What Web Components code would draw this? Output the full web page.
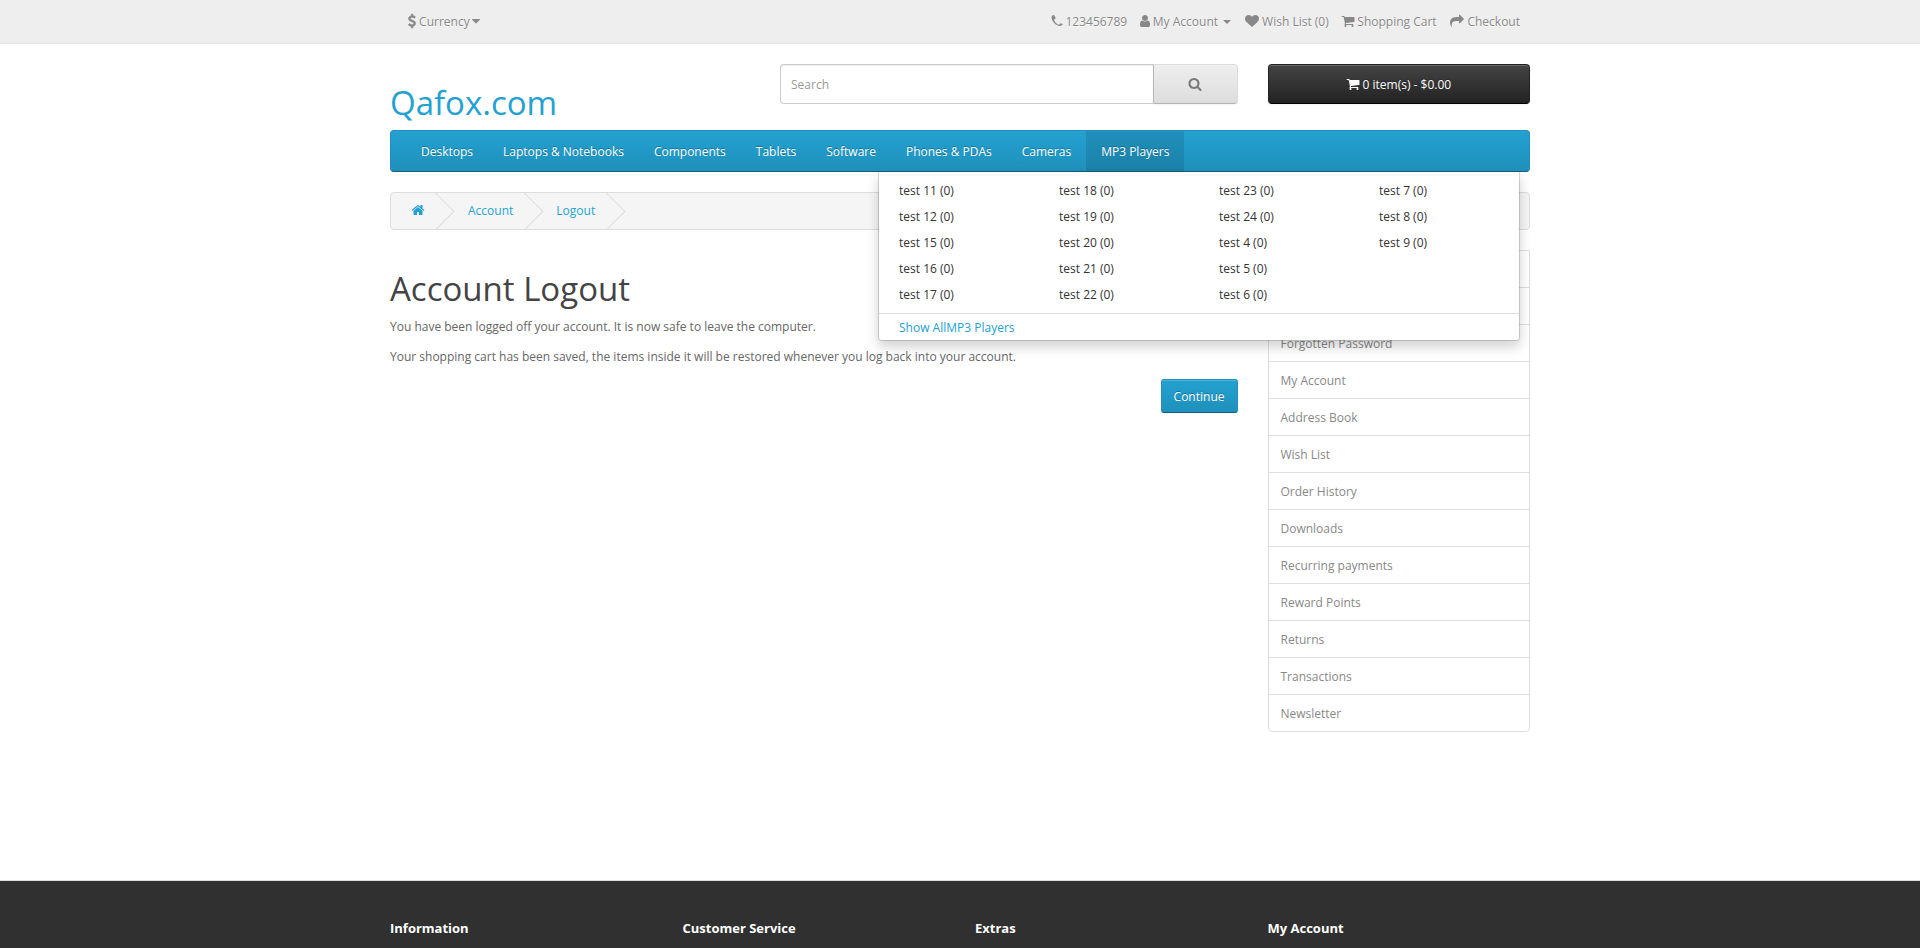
<!DOCTYPE html>
<html lang="en">
<head>
<meta charset="utf-8">
<title>Account Logout</title>
<style>
    html, body { margin: 0; padding: 0; background: #fff; }
    body { font-family: "Open Sans", sans-serif; font-size: 12px; line-height: 20px; color: #666; overflow: hidden; }
</style>
</head>
<body>
<top-bar></top-bar>
<site-header></site-header>
<main-menu active="MP3 Players"></main-menu>
<bread-crumbs></bread-crumbs>
<page-body>
    <h1 slot="title">Account Logout</h1>
    <p>You have been logged off your account. It is now safe to leave the computer.</p>
    <p>Your shopping cart has been saved, the items inside it will be restored whenever you log back into your account.</p>
    <account-list slot="side"></account-list>
</page-body>
<site-footer></site-footer>

<script>
const ICONS = {
    home: [13, "M1472 992v480q0 26-19 45t-45 19h-384v-384h-256v384h-384q-26 0-45-19t-19-45v-480q0-1 .5-3t.5-3l575-474 575 474q1 2 1 6zm223-69l-62 74q-8 9-21 11h-3q-13 0-21-7l-692-577-692 577q-12 8-24 7-13-2-21-11l-62-74q-8-10-7-23.5t11-21.5l719-599q32-26 76-26t76 26l244 204v-195q0-14 9-23t23-9h192q14 0 23 9t9 23v408l219 182q10 8 11 21.5t-7 23.5z"],
    search: [13, "M1216 832q0-185-131.5-316.5t-316.5-131.5-316.5 131.5-131.5 316.5 131.5 316.5 316.5 131.5 316.5-131.5 131.5-316.5zm512 832q0 52-38 90t-90 38q-54 0-90-38l-343-342q-179 124-399 124-143 0-273.5-55.5t-225-150-150-225-55.5-273.5 55.5-273.5 150-225 225-150 273.5-55.5 273.5 55.5 225 150 150 225 55.5 273.5q0 220-124 399l343 343q37 37 37 90z"],
    cart: [13, "M704 1536q0 52-38 90t-90 38-90-38-38-90 38-90 90-38 90 38 38 90zm896 0q0 52-38 90t-90 38-90-38-38-90 38-90 90-38 90 38 38 90zm128-1088v512q0 24-16.5 42.5t-40.5 21.5l-1044 122q13 60 13 70 0 16-24 64h920q26 0 45 19t19 45-19 45-45 19h-1024q-26 0-45-19t-19-45q0-11 8-31.5t16-36 21.5-40 15.5-29.5l-177-823h-204q-26 0-45-19t-19-45 19-45 45-19h256q16 0 28.5 6.5t19.5 15.5 13 24.5 8 26 5.5 29.5 4.5 26h1201q26 0 45 19t19 45z"],
    heart: [14, "M896 1664q-26 0-44-18l-624-602q-10-8-27.5-26t-55.5-65.5-68-97.5-53.5-121-23.5-138q0-220 127-344t351-124q62 0 126.5 21.5t120 58 95.5 68.5 76 68q36-36 76-68t95.5-68.5 120-58 126.5-21.5q224 0 351 124t127 344q0 221-229 450l-623 600q-18 18-44 18z"],
    user: [10, "M1536 1399q0 109-62.5 187t-150.5 78h-854q-88 0-150.5-78t-62.5-187q0-85 8.5-160.5t31.5-152 58.5-131 94-89 134.5-34.5q131 128 313 128t313-128q76 0 134.5 34.5t94 89 58.5 131 31.5 152 8.5 160.5zm-256-887q0 159-112.5 271.5t-271.5 112.5-271.5-112.5-112.5-271.5 112.5-271.5 271.5-112.5 271.5 112.5 112.5 271.5z"],
    phone: [11, "M1600 1240q0 27-10 70.5t-21 70.5q-21 50-122 106-94 51-186 51-27 0-53-3.5t-57.5-12.5-47-14.5-55.5-20.5-49-18q-98-35-175-83-127-79-264-216t-216-264q-48-77-83-175-3-9-18-49t-20.5-55.5-14.5-47-12.5-57.5-3.5-53q0-92 51-186 56-101 106-122 25-11 66.5-20.5t70.5-9.5q15 0 23 3 20 7 59 85 12 21 33 60t39 70.5 35 59.5q2 3 19.5 28t26 42.5 8.5 34.5q0 24-34 60t-74 66-74 64-34 55q0 11 6 27.5t10 25 16 27.5 13 21q90 162 206 278t278 206q2 1 21 13t27.5 16 25 10 27.5 6q21 0 55-34t64-74 66-74 60-34q17 0 34.5 8.5t42.5 26 28 19.5q28 17 59.5 35t70.5 39 60 33q78 39 85 59 3 8 3 23z"],
    share: [14, "M1792 640q0 26-19 45l-512 512q-19 19-45 19t-45-19-19-45v-256h-224q-98 0-175.5 6t-154 21.5-133 42.5-105.5 69.5-80 101-48.5 138.5-17.5 181q0 55 5 123 0 6 2.5 23.5t2.5 26.5q0 15-8.5 25t-23.5 10q-16 0-28-17-7-9-13-22t-13.5-30-10.5-24q-127-285-127-451 0-199 53-333 162-403 875-403h224v-256q0-26 19-45t45-19 45 19l512 512q19 19 19 45z"],
    usd: [8, "M1362 1185q0 153-99.5 263.5t-258.5 136.5v175q0 14-9 23t-23 9h-135q-13 0-22.5-9.5t-9.5-22.5v-175q-66-9-127.5-31t-101.5-44.5-74-48-46.5-37.5-17.5-18q-17-21-2-41l103-135q7-10 23-12 15-2 24 9l2 2q113 99 243 125 37 8 74 8 81 0 142.5-43t61.5-122q0-28-15-53t-33.5-42-58.5-37.5-66-32-80-32.5q-39-16-61.5-25t-61.5-26.5-62.5-31-56.5-35.5-53.5-42.5-43.5-49-35.5-58-21-66.5-8.5-78q0-138 98-242t255-134v-180q0-13 9.5-22.5t22.5-9.5h135q14 0 23 9t9 23v176q57 6 110.5 23t87 33.5 63.5 37.5 39 29 15 14q17 18 5 38l-81 146q-8 15-23 16-14 3-27-7-3-3-14.5-12t-39-26.5-58.5-32-74.5-26-85.5-11.5q-95 0-155 43t-60 111q0 26 8.5 48t29.5 41.5 39.5 33 56 31 60.5 27 70 27.5q53 20 81 31.5t76 35 75.5 42.5 62 50 53 63.5 31.5 76.5 13 94z"],
    caret: [8, "M1408 704q0 26-19 45l-448 448q-19 19-45 19t-45-19l-448-448q-19-19-19-45t19-45 45-19h896q26 0 45 19t19 45z"]
};

class FaIcon extends HTMLElement {
    constructor() {
        super();
        this.attachShadow({ mode: "open" });
    }
    connectedCallback() {
        const [width, d] = ICONS[this.getAttribute("name")];
        this.shadowRoot.innerHTML = `
            <style>
                :host { display: inline-flex; justify-content: center; align-items: center; width: ${width}px; height: 14px; vertical-align: -2px; }
                svg { flex: none; width: 14px; height: 14px; fill: currentColor; overflow: visible; }
            </style>
            <svg viewBox="0 0 1792 1792"><path d="${d}"/></svg>
        `;
    }
}
customElements.define("fa-icon", FaIcon);

class TopBar extends HTMLElement {
    constructor() {
        super();
        this.attachShadow({ mode: "open" });
        this.shadowRoot.innerHTML = `
            <style>
                :host { display: block; background: #eee; border-bottom: 1px solid #e2e2e2; margin-bottom: 20px; color: #888; }
                .container { width: 1140px; height: 43px; margin: 0 auto; display: flex; justify-content: space-between; align-items: center; }
                a { color: #888; text-decoration: none; text-shadow: 0 1px 0 #fff; white-space: nowrap; }
                .currency { padding-left: 18px; }
                .links { display: flex; gap: 12.5px; padding-right: 10px; }
                .links .account { margin-right: 1.3px; }
                .links .shop { margin-right: 1.2px; }
                .usd { stroke: currentColor; stroke-width: 70px; }
                .caret { display: inline-block; margin-left: 2px; vertical-align: middle; border-top: 4px solid #888; border-left: 4px solid transparent; border-right: 4px solid transparent; }
            </style>
            <div class="container">
                <a class="currency" href="#"><fa-icon class="usd" name="usd"></fa-icon> Currency <fa-icon name="caret" style="margin-left:-1px"></fa-icon></a>
                <div class="links">
                    <a href="#"><fa-icon name="phone"></fa-icon> 123456789</a>
                    <a class="account" href="#"><fa-icon name="user"></fa-icon> My Account <span class="caret"></span></a>
                    <a href="#"><fa-icon name="heart"></fa-icon> Wish List (0)</a>
                    <a class="shop" href="#"><fa-icon name="cart"></fa-icon> Shopping Cart</a>
                    <a href="#"><fa-icon name="share"></fa-icon> Checkout</a>
                </div>
            </div>
        `;
    }
}
customElements.define("top-bar", TopBar);

class SiteHeader extends HTMLElement {
    constructor() {
        super();
        this.attachShadow({ mode: "open" });
        this.shadowRoot.innerHTML = `
            <style>
                :host { display: block; }
                .container { width: 1140px; height: 66px; margin: 0 auto; display: grid; grid-template-columns: 360px 457.5px 262.5px; column-gap: 30px; align-items: start; }
                h1 { margin: 21px 0 0; font-size: 33px; line-height: 36px; font-weight: 400; }
                h1 a { color: #23a1d1; text-decoration: none; }
                .search { display: flex; height: 40px; }
                input { flex: 1; min-width: 0; box-sizing: border-box; height: 40px; margin: 0; padding: 0 10px; font: 12px/20px "Open Sans", sans-serif; color: #555; background: #fff; border: 1px solid #ccc; border-right: 0; border-radius: 4px 0 0 4px; box-shadow: inset 0 1px 1px rgba(0,0,0,.075); outline: 0; }
                input::placeholder { color: #999; opacity: 1; }
                .search button { box-sizing: border-box; width: 85px; height: 40px; padding: 0; color: #777; background: linear-gradient(to bottom, #eee, #ddd); border: 1px solid; border-color: #ddd #ddd #b3b3b3 #b7b7b7; border-radius: 0 4px 4px 0; box-shadow: inset 0 1px 0 rgba(255,255,255,.2), 0 1px 2px rgba(0,0,0,.05); display: flex; justify-content: center; align-items: center; }
                .cart { box-sizing: border-box; width: 100%; height: 40px; padding: 2px 0 0; font: 12px/18px "Open Sans", sans-serif; color: #fff; text-shadow: 0 -1px 0 rgba(0,0,0,.25); background: linear-gradient(to bottom, #444, #222); border: 1px solid; border-color: #222 #222 #000; border-radius: 4px; box-shadow: inset 0 1px 0 rgba(255,255,255,.2), 0 1px 2px rgba(0,0,0,.05); }
            </style>
            <div class="container">
                <h1><a href="#">Qafox.com</a></h1>
                <div class="search">
                    <input type="text" placeholder="Search">
                    <button type="button" aria-label="Search"><fa-icon name="search"></fa-icon></button>
                </div>
                <button class="cart" type="button"><fa-icon name="cart"></fa-icon> 0 item(s) - $0.00</button>
            </div>
        `;
    }
}
customElements.define("site-header", SiteHeader);

const MENU_ITEMS = ["Desktops", "Laptops & Notebooks", "Components", "Tablets", "Software", "Phones & PDAs", "Cameras", "MP3 Players"];
const MP3_COLUMNS = [
    ["test 11 (0)", "test 12 (0)", "test 15 (0)", "test 16 (0)", "test 17 (0)"],
    ["test 18 (0)", "test 19 (0)", "test 20 (0)", "test 21 (0)", "test 22 (0)"],
    ["test 23 (0)", "test 24 (0)", "test 4 (0)", "test 5 (0)", "test 6 (0)"],
    ["test 7 (0)", "test 8 (0)", "test 9 (0)"]
];

class MainMenu extends HTMLElement {
    constructor() {
        super();
        this.attachShadow({ mode: "open" });
    }
    getStyles() {
        return `
            <style>
                :host { display: block; position: relative; z-index: 10; }
                .container { width: 1140px; margin: 0 auto; position: relative; }
                nav { box-sizing: border-box; height: 42px; margin-bottom: 20px; padding-left: 15px; display: flex; background: linear-gradient(to bottom, #23a1d1, #1f90bb); border: 1px solid; border-color: #1f90bb #1f90bb #145e7a; border-radius: 4px; }
                nav a { padding: 11px 15px 9px; height: 20px; color: #fff; text-decoration: none; text-shadow: 0 -1px 0 rgba(0,0,0,.25); }
                nav a.active { background: rgba(0,0,0,.1); }
                .dropdown { position: absolute; top: 42px; left: 488px; box-sizing: border-box; width: 642px; padding-top: 5px; background: #fff; border: 1px solid rgba(0,0,0,.15); border-top: 0; border-radius: 0 0 4px 4px; box-shadow: 0 6px 12px rgba(0,0,0,.175); background-clip: padding-box; }
                .inner { display: grid; grid-template-columns: repeat(4, 160px); }
                .inner a { display: block; padding: 4px 20px 2px; line-height: 20px; color: #333; text-decoration: none; }
                .see-all { display: block; margin-top: 6px; padding: 4px 20px 2px; line-height: 20px; border-top: 1px solid #ddd; color: #23a1d1; text-decoration: none; }
            </style>
        `;
    }
    render() {
        const active = this.getAttribute("active");
        const items = MENU_ITEMS.map(item => `<a href="#" class="${item === active ? "active" : ""}">${item.replace("&", "&amp;")}</a>`).join("");
        const cols = MP3_COLUMNS.map(col => `<div>${col.map(t => `<a href="#">${t}</a>`).join("")}</div>`).join("");
        this.shadowRoot.innerHTML = `
            ${this.getStyles()}
            <div class="container">
                <nav>${items}</nav>
                <div class="dropdown">
                    <div class="inner">${cols}</div>
                    <a class="see-all" href="#">Show AllMP3 Players</a>
                </div>
            </div>
        `;
    }
    connectedCallback() {
        this.render();
    }
}
customElements.define("main-menu", MainMenu);

class BreadCrumbs extends HTMLElement {
    constructor() {
        super();
        this.attachShadow({ mode: "open" });
        this.shadowRoot.innerHTML = `
            <style>
                :host { display: block; }
                ul { box-sizing: border-box; width: 1140px; height: 38px; margin: 0 auto 20px; padding: 8px 0; list-style: none; display: flex; gap: 3px; background: #f5f5f5; border: 1px solid #ddd; border-radius: 4px; overflow: hidden; }
                li { position: relative; padding: 0 20px; white-space: nowrap; text-shadow: 0 1px 0 #fff; }
                li:first-child { margin-right: 1px; }
                li::after { content: ""; display: block; position: absolute; top: -3px; right: -5px; width: 26px; height: 26px; border-right: 1px solid #ddd; border-bottom: 1px solid #ddd; transform: rotate(-45deg); }
                a { color: #23a1d1; text-decoration: none; }
            </style>
            <ul>
                <li><a href="#" aria-label="Home"><fa-icon name="home"></fa-icon></a></li>
                <li><a href="#">Account</a></li>
                <li><a href="#">Logout</a></li>
            </ul>
        `;
    }
}
customElements.define("bread-crumbs", BreadCrumbs);

class PageBody extends HTMLElement {
    constructor() {
        super();
        this.attachShadow({ mode: "open" });
        this.shadowRoot.innerHTML = `
            <style>
                :host { display: block; }
                .container { width: 1140px; margin: 0 auto; display: grid; grid-template-columns: 847.5px 262.5px; column-gap: 30px; align-items: start; }
                .content { min-height: 600px; }
                ::slotted(h1) { margin: 21px 0 9px; font-size: 33px; line-height: 36.3px; font-weight: 400; color: #444; }
                ::slotted(p) { margin: 0 0 9px; padding-top: 1px; }
                .buttons { margin: 12px 0; display: flex; justify-content: flex-end; }
                button { box-sizing: border-box; height: 34px; padding: 0 12px; font: 12px/17px "Open Sans", sans-serif; color: #fff; text-shadow: 0 -1px 0 rgba(0,0,0,.25); background: linear-gradient(to bottom, #23a1d1, #1f90bb); border: 1px solid; border-color: #1f90bb #1f90bb #145e7a; border-radius: 3px; box-shadow: inset 0 1px 0 rgba(255,255,255,.2), 0 1px 2px rgba(0,0,0,.05); }
            </style>
            <div class="container">
                <div class="content">
                    <slot name="title"></slot>
                    <slot></slot>
                    <div class="buttons"><button type="button">Continue</button></div>
                </div>
                <slot name="side"></slot>
            </div>
        `;
    }
}
customElements.define("page-body", PageBody);

class AccountList extends HTMLElement {
    constructor() {
        super();
        this.attachShadow({ mode: "open" });
        const names = ["Login", "Register", "Forgotten Password", "My Account", "Address Book", "Wish List", "Order History", "Downloads", "Recurring payments", "Reward Points", "Returns", "Transactions", "Newsletter"];
        this.shadowRoot.innerHTML = `
            <style>
                :host { display: block; }
                a { display: block; height: 20px; padding: 9px 12px 7px; margin-bottom: -1px; color: #888; background: #fff; border: 1px solid #ddd; text-decoration: none; }
                a:first-child { border-radius: 4px 4px 0 0; }
                a:last-child { margin-bottom: 0; border-radius: 0 0 4px 4px; }
            </style>
            ${names.map(n => `<a href="#">${n}</a>`).join("")}
        `;
    }
}
customElements.define("account-list", AccountList);

class SiteFooter extends HTMLElement {
    constructor() {
        super();
        this.attachShadow({ mode: "open" });
        this.shadowRoot.innerHTML = `
            <style>
                :host { display: block; box-sizing: border-box; height: 68px; margin-top: 30px; padding-top: 30px; background: #303030; border-top: 1px solid #ddd; color: #e2e2e2; overflow: hidden; }
                .container { width: 1140px; margin: 0 auto; display: grid; grid-template-columns: repeat(4, 292.5px); column-gap: 0; }
                h5 { margin: 10px 0; font-size: 13px; line-height: 14.3px; font-weight: 700; color: #fff; }
            </style>
            <div class="container">
                <h5>Information</h5>
                <h5>Customer Service</h5>
                <h5>Extras</h5>
                <h5>My Account</h5>
            </div>
        `;
    }
}
customElements.define("site-footer", SiteFooter);
</script>
</body>
</html>
